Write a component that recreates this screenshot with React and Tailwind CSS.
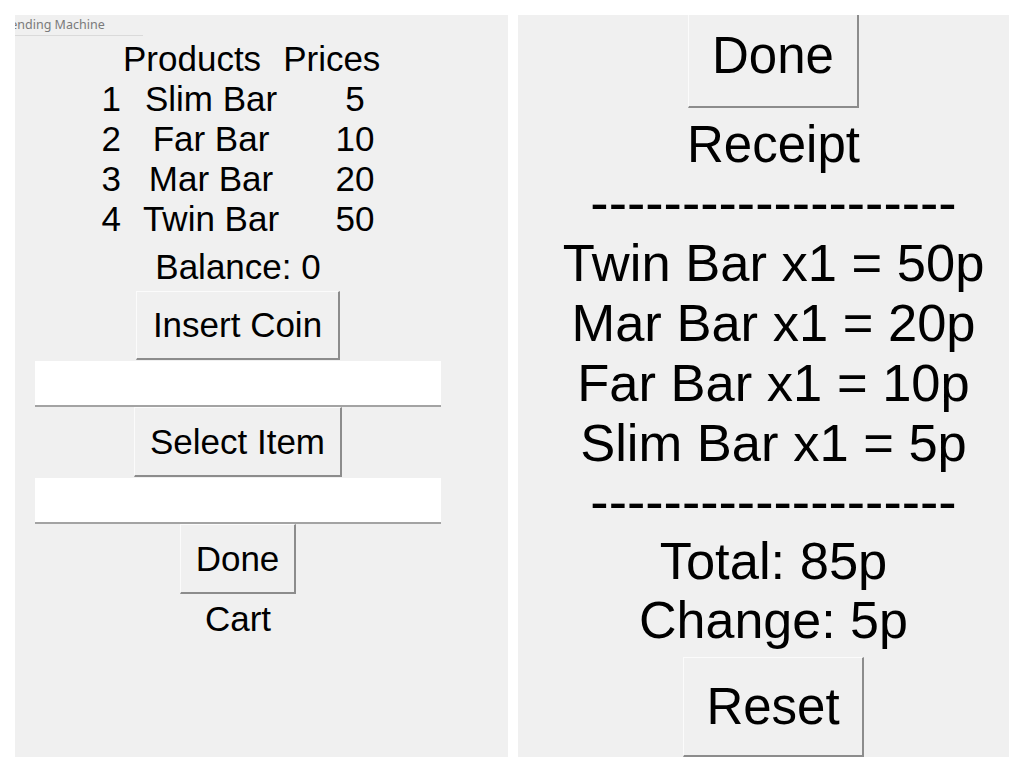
import React from 'react';

const products = [
  { id: 1, name: 'Slim Bar', price: 5 },
  { id: 2, name: 'Far Bar', price: 10 },
  { id: 3, name: 'Mar Bar', price: 20 },
  { id: 4, name: 'Twin Bar', price: 50 },
];

const receipt = ['Twin Bar x1 = 50p', 'Mar Bar x1 = 20p', 'Far Bar x1 = 10p', 'Slim Bar x1 = 5p'];

// classic raised Win32 button
const btn =
  'flex items-center justify-center bg-[#f0f0f0] border-t border-l border-t-[#fbfbfb] border-l-[#fbfbfb] border-b-2 border-r-2 border-b-[#8c8c8c] border-r-[#8c8c8c] text-black';

const Entry = () => <div className="w-[406px] h-[46px] bg-white border-b-2 border-[#a3a3a3]" />;

const VendingPanel = () => (
  <div className="w-[493px] h-[742px] bg-[#f0f0f0] overflow-hidden flex flex-col text-black">
    {/* Title strip */}
    <div className="h-[22px] shrink-0 relative">
      <div className="ml-[-12px] pt-[1px] text-[12.5px] leading-[18px] text-[#7a7a7a] font-['Noto_Sans',sans-serif] whitespace-nowrap">
        Vending Machine
      </div>
      <div className="absolute left-0 top-[20px] w-[128px] h-px bg-[#dadada]" />
    </div>

    <div className="font-['Liberation_Sans',Arial,sans-serif] text-[35px] leading-[40px]">
      <div className="mt-[2px] ml-[108px] flex gap-[22px]">
        <span>Products</span>
        <span>Prices</span>
      </div>
      <div className="ml-[75px] grid grid-cols-[31px_180px_108px]">
        {products.map((p) => (
          <React.Fragment key={p.id}>
            <span className="text-right">{p.id}</span>
            <span className="text-center">{p.name}</span>
            <span className="text-center">{p.price}</span>
          </React.Fragment>
        ))}
      </div>

      <div className="ml-[20px] w-[406px] flex flex-col items-center">
        <div className="mt-[8px] h-[40px]">Balance: 0</div>
        <div className={`${btn} mt-[4px] w-[204px] h-[69px]`}>Insert Coin</div>
        <div className="mt-[1px]"><Entry /></div>
        <div className={`${btn} w-[208px] h-[70px]`}>Select Item</div>
        <div className="mt-[1px]"><Entry /></div>
        <div className={`${btn} w-[116px] h-[70px]`}>Done</div>
        <div className="mt-[5px] h-[40px]">Cart</div>
      </div>
    </div>
  </div>
);

const ReceiptPanel = () => (
  <div className="w-[491px] h-[742px] bg-[#f0f0f0] overflow-hidden pl-[20px] flex flex-col items-center text-black font-['Liberation_Sans',Arial,sans-serif] text-[51px]">
    <div className={`${btn} mt-[-10px] shrink-0 w-[171px] h-[103px] leading-[58px]`}>Done</div>
    <div className="mt-[8px] h-[58px] leading-[58px]">Receipt</div>
    <div className="h-[59px] leading-[59px] text-[55px]">--------------------</div>
    {receipt.map((line) => (
      <div key={line} className="h-[60px] leading-[60px] text-[52.5px] whitespace-nowrap">{line}</div>
    ))}
    <div className="h-[59px] leading-[59px] text-[55px]">--------------------</div>
    <div className="h-[58px] leading-[58px] text-[52.5px]">Total: 85p</div>
    <div className="h-[60px] leading-[60px] text-[52px]">Change: 5p</div>
    <div className={`${btn} mt-[7px] shrink-0 w-[181px] h-[100px] leading-[58px]`}>Reset</div>
  </div>
);

export default function App() {
  return (
    <div className="w-[1024px] h-[769px] bg-white pt-[15px] pl-[15px] flex gap-[10px]">
      <VendingPanel />
      <ReceiptPanel />
    </div>
  );
}
